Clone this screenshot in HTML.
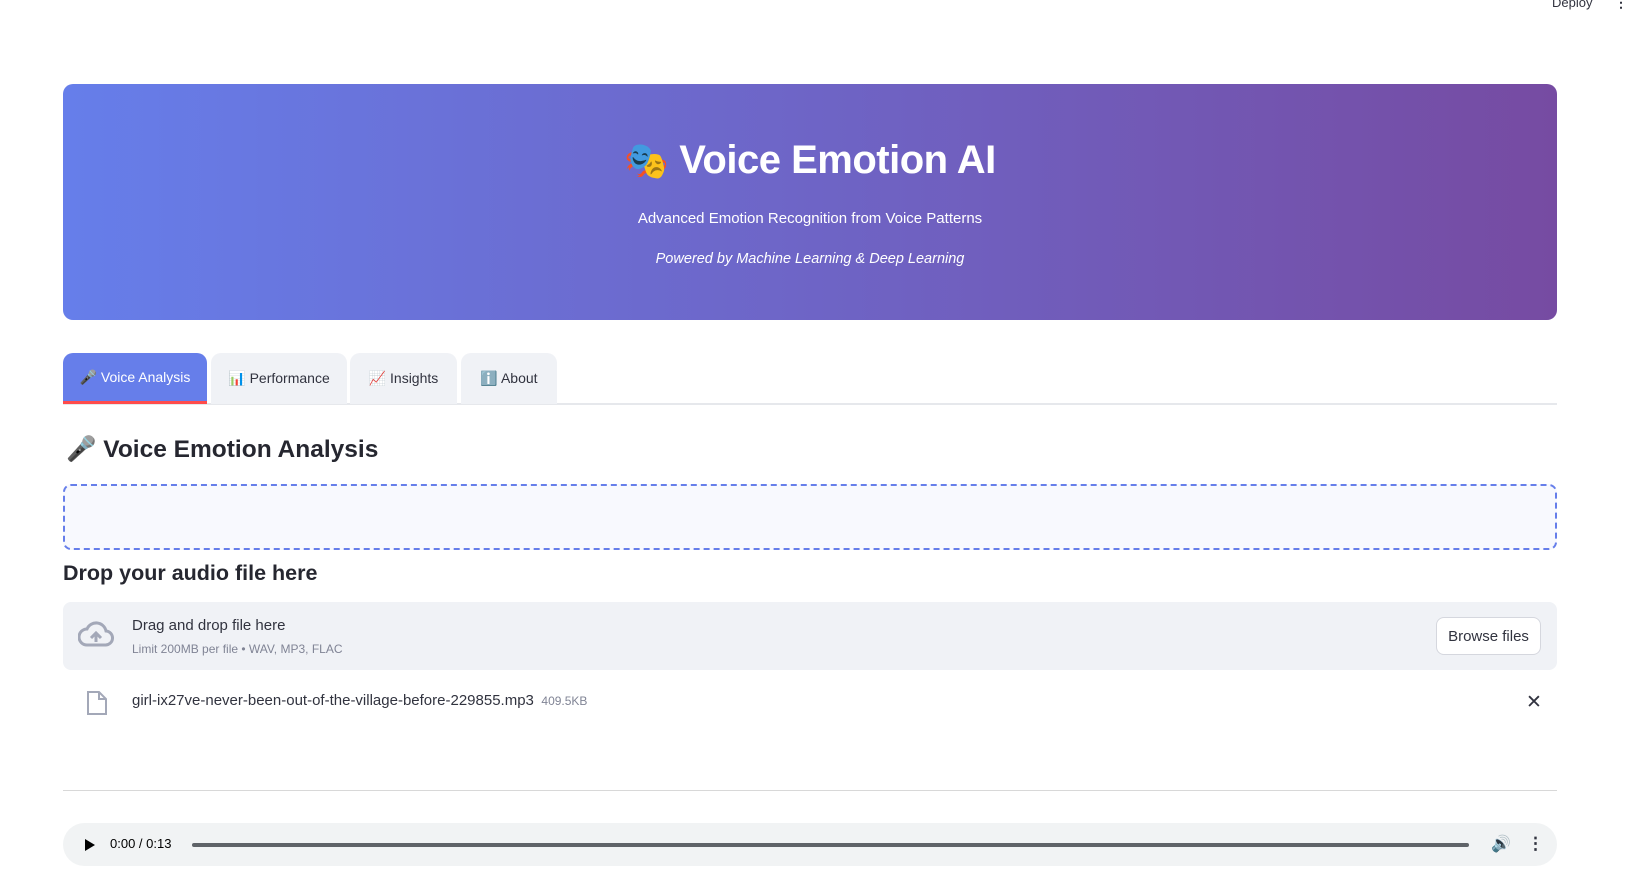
<!DOCTYPE html>
<html><head><meta charset="utf-8"><style>
*{box-sizing:border-box;margin:0;padding:0}
body{width:1638px;height:887px;background:#fff;font-family:"Liberation Sans",sans-serif;color:#31333f;position:relative;overflow:hidden}
.abs{position:absolute}
.banner{left:63px;top:84px;width:1494px;height:236px;border-radius:10px;background:linear-gradient(90deg,#667eea,#764ba2);color:#fff;text-align:center}
.tab{top:353px;height:51px;background:#f0f2f6;border-radius:10px 10px 0 0;font-size:14px;display:flex;align-items:center;justify-content:center;gap:6px;color:#31333f}
</style></head><body>
<div class="abs" style="left:1552px;top:-5px;font-size:13px;color:#31333f">Deploy</div>
<div class="abs" style="left:1614px;top:-6px;font-size:14px;font-weight:bold">⋮</div>

<div class="abs banner">
  <div class="abs" style="left:0;right:0;top:54px;font-size:40px;font-weight:bold;letter-spacing:-0.5px"><span style="font-size:36px">🎭</span> Voice Emotion AI</div>
  <div class="abs" style="left:0;right:0;top:126px;font-size:15px">Advanced Emotion Recognition from Voice Patterns</div>
  <div class="abs" style="left:0;right:0;top:167px;font-size:14.5px;font-style:italic">Powered by Machine Learning &amp; Deep Learning</div>
</div>

<div class="abs" style="left:63px;top:403px;width:1494px;height:2px;background:#e6e8ec"></div>
<div class="abs tab" style="left:63px;width:144px;background:#667eea;color:#fff;border-bottom:3px solid #ff4b4b">🎤 Voice Analysis</div>
<div class="abs tab" style="left:211px;width:136px">📊 Performance</div>
<div class="abs tab" style="left:350px;width:107px">📈 Insights</div>
<div class="abs tab" style="left:461px;width:96px">ℹ️ About</div>

<div class="abs" style="left:66px;top:434px;font-size:24.5px;font-weight:bold;color:#262730">🎤 Voice Emotion Analysis</div>

<div class="abs" style="left:63px;top:484px;width:1494px;height:66px;border:2px dashed #667eea;border-radius:8px;background:#f8f9fe"></div>

<div class="abs" style="left:63px;top:561px;font-size:21.5px;font-weight:bold;color:#262730">Drop your audio file here</div>

<div class="abs" style="left:63px;top:602px;width:1494px;height:68px;background:#f0f2f6;border-radius:8px"></div>
<svg class="abs" style="left:78px;top:620px" width="36" height="30" viewBox="0 0 36 30"><path d="M9 25 H27 A7 7 0 0 0 28 11 A10 10 0 0 0 9 9 A8 8 0 0 0 9 25 Z" fill="none" stroke="#a3a8b8" stroke-width="3"/><path d="M18 22 V14 M13 18 L18 13 L23 18" fill="none" stroke="#a3a8b8" stroke-width="3"/></svg>
<div class="abs" style="left:132px;top:617px;font-size:15px;color:#31333f">Drag and drop file here</div>
<div class="abs" style="left:132px;top:642px;font-size:12px;color:#808495">Limit 200MB per file • WAV, MP3, FLAC</div>
<div class="abs" style="left:1436px;top:617px;width:105px;height:38px;background:#fff;border:1px solid #d5d7de;border-radius:8px;font-size:15px;display:flex;align-items:center;justify-content:center">Browse files</div>

<svg class="abs" style="left:86px;top:690px" width="22" height="26" viewBox="0 0 22 26"><path d="M2 2 H13 L20 9 V24 H2 Z M13 2 V9 H20" fill="none" stroke="#a3a8b8" stroke-width="2"/></svg>
<div class="abs" style="left:132px;top:692px;font-size:15px;color:#31333f">girl-ix27ve-never-been-out-of-the-village-before-229855.mp3 <span style="font-size:12px;color:#808495">&nbsp;409.5KB</span></div>
<div class="abs" style="left:1526px;top:691px;font-size:19px;color:#31333f">✕</div>

<div class="abs" style="left:63px;top:790px;width:1494px;height:1px;background:#d8d8d8"></div>

<div class="abs" style="left:63px;top:823px;width:1494px;height:43px;background:#f1f3f4;border-radius:22px"></div>
<svg class="abs" style="left:84px;top:838px" width="12" height="14"><path d="M1 1 L11 7 L1 13 Z" fill="#000"/></svg>
<div class="abs" style="left:110px;top:836px;font-size:13px;color:#000">0:00 / 0:13</div>
<div class="abs" style="left:192px;top:843px;width:1277px;height:4px;background:#5f6368;border-radius:2px"></div>
<div class="abs" style="left:1491px;top:834px;font-size:16px">🔊</div>
<div class="abs" style="left:1527px;top:834px;font-size:17px;font-weight:bold">⋮</div>
</body></html>
